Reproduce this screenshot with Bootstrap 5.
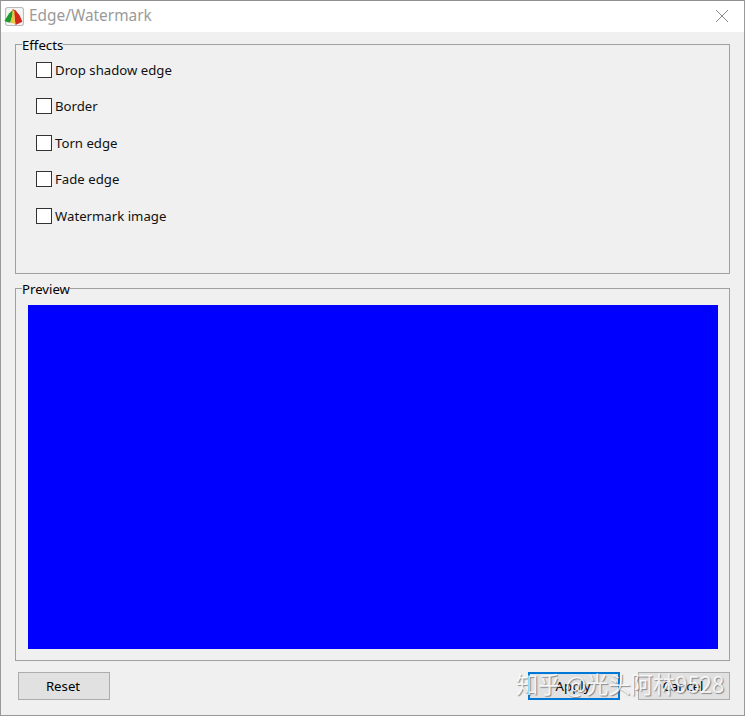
<!DOCTYPE html>
<html lang="en">
<head>
<meta charset="utf-8">
<title>Edge/Watermark</title>
<link href="https://cdn.jsdelivr.net/npm/bootstrap@5.3.0/dist/css/bootstrap.min.css" rel="stylesheet">
<style>
html,body{height:100%;}
body{margin:0;background:#f0f0f0;font-family:"Noto Sans",sans-serif;font-size:13.2px;color:#000;overflow:hidden;}
.dlg-window{width:745px;height:716px;position:relative;background:#f0f0f0;border:1px solid #999;border-top-color:#8f8f8f;display:flex;flex-direction:column;}
.dlg-title{height:31px;background:#fff;padding-left:3px;padding-right:15px;flex:none;}
.dlg-title-text{color:#9a9a9a;font-size:15.4px;margin-left:4px;margin-top:-1px;}
.dlg-app-icon{display:block;flex:none;margin-top:-1px;}
.dlg-close{margin-top:-2px;}
.dlg-body{padding:3px 14px 0 14px;flex:1;display:flex;flex-direction:column;}
.dlg-group{border:1px solid #a0a0a0;padding:0;margin:0;min-width:0;}
.dlg-group legend{float:none;width:auto;font-size:13.2px;line-height:17px;margin:0 0 0 6px;padding:2px 0 0 0;color:#000;}
.dlg-effects{height:239px;}
.dlg-preview{height:382px;margin-top:5px;}
.dlg-checks{padding:0 0 0 20px;margin-top:6.6px;}
.dlg-check{display:flex;align-items:center;height:18px;margin-bottom:18.5px;}
.dlg-check .form-check-input{width:16px;height:16px;margin:0 3px 0 0;border:1px solid #333;border-radius:0;background-color:#fff;flex:none;}
.dlg-check label{font-size:13.2px;line-height:18px;color:#111;}
.dlg-canvas{background:#0000ff;height:344px;margin:7px 11px 0 12px;}
.dlg-actions{padding:11px 0 0 3px;}
.dlg-btn{width:92px;height:28px;background:#e1e1e1;border:1px solid #adadad;border-radius:0;font-size:13.2px;line-height:26px;padding:0 2px 0 0;color:#000;}
.dlg-btn:hover{background:#e1e1e1;border-color:#adadad;color:#000;}
.dlg-btn-default{border:2px solid #0078d7;line-height:24px;}
.dlg-btn-default:hover{border-color:#0078d7;}
.dlg-btn-gap{gap:18px;}
.dlg-wm{position:absolute;left:515px;top:665px;font-family:"Noto Sans CJK SC","Noto Sans",sans-serif;font-size:22.2px;line-height:34px;color:rgba(255,255,255,.86);text-shadow:1px 1px 1px rgba(90,90,90,.65);white-space:nowrap;pointer-events:none;}
</style>
</head>
<body>
<div class="dlg-window">
  <div class="dlg-title d-flex align-items-center">
    <svg class="dlg-app-icon" width="21" height="21" viewBox="0 0 20 20" aria-hidden="true">
      <rect x="1.5" y="1.5" width="17" height="17" rx="2" fill="#f4f4f4" stroke="#b9b9b9"/>
      <path d="M0.5 14 L5 7 L9 3 L8 9 L6 16 L2 15Z" fill="#1f9a2e"/>
      <path d="M8 3 L11 4 L15 9 L17.5 15 L11 18 L10 10Z" fill="#d5281d"/>
      <path d="M8 3 L10 5 L10 10 L10.5 17 L6 16 L8 9Z" fill="#efc33c"/>
    </svg>
    <div class="dlg-title-text">Edge/Watermark</div>
    <svg class="ms-auto dlg-close" width="14" height="14" viewBox="0 0 14 14" aria-hidden="true"><path d="M1 1 L13 13 M13 1 L1 13" stroke="#8a8a8a" stroke-width="1" fill="none"/></svg>
  </div>
  <div class="dlg-body">
    <fieldset class="dlg-group dlg-effects">
      <legend>Effects</legend>
      <div class="dlg-checks">
        <div class="dlg-check"><input class="form-check-input" type="checkbox" id="c1"><label for="c1">Drop shadow edge</label></div>
        <div class="dlg-check"><input class="form-check-input" type="checkbox" id="c2"><label for="c2">Border</label></div>
        <div class="dlg-check"><input class="form-check-input" type="checkbox" id="c3"><label for="c3">Torn edge</label></div>
        <div class="dlg-check"><input class="form-check-input" type="checkbox" id="c4"><label for="c4">Fade edge</label></div>
        <div class="dlg-check"><input class="form-check-input" type="checkbox" id="c5"><label for="c5">Watermark image</label></div>
      </div>
    </fieldset>
    <fieldset class="dlg-group dlg-preview">
      <legend>Preview</legend>
      <div class="dlg-canvas"></div>
    </fieldset>
    <div class="dlg-actions d-flex justify-content-between">
      <button type="button" class="btn dlg-btn">Reset</button>
      <div class="d-flex dlg-btn-gap">
        <button type="button" class="btn dlg-btn dlg-btn-default">Apply</button>
        <button type="button" class="btn dlg-btn">Cancel</button>
      </div>
    </div>
  </div>
  <div class="dlg-wm">知乎 @光头阿林9528</div>
</div>
<script src="https://cdn.jsdelivr.net/npm/bootstrap@5.3.0/dist/js/bootstrap.bundle.min.js"></script>
</body>
</html>
